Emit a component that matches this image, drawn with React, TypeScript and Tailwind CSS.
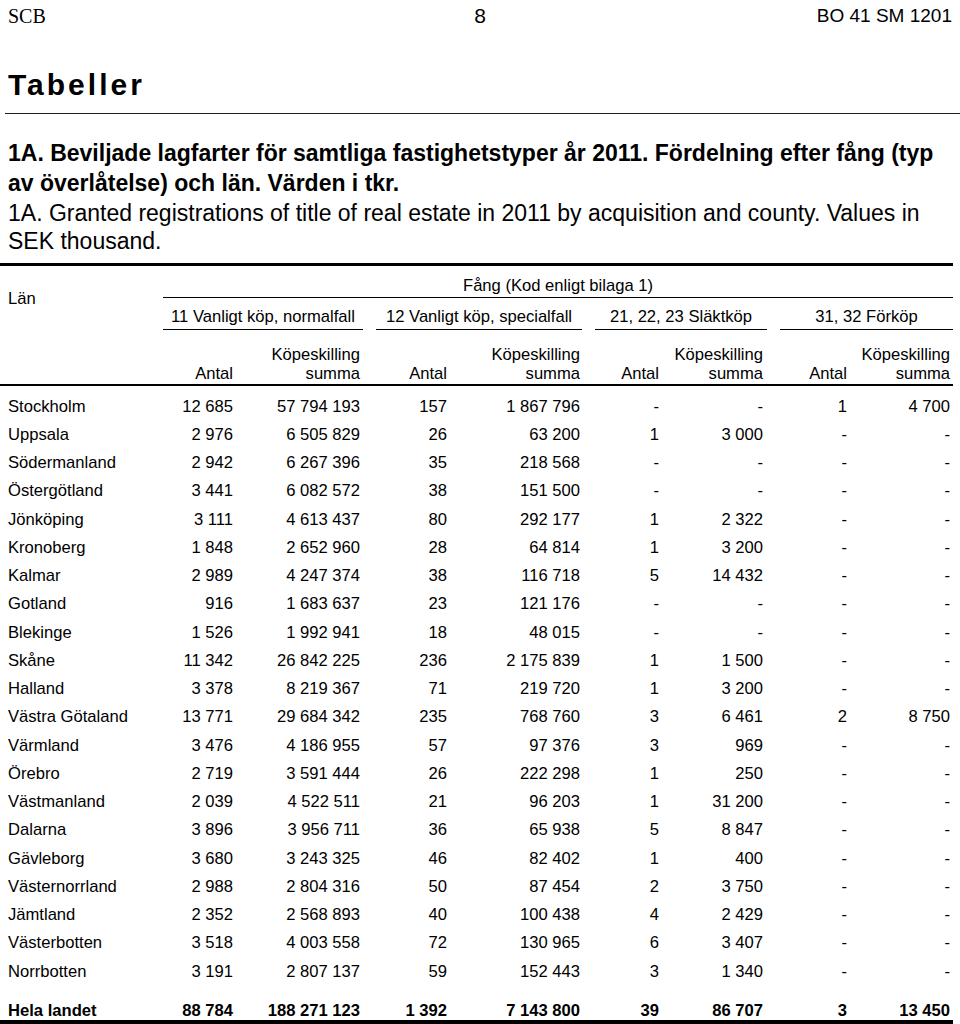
import React from 'react'

type Row = [string, string, string, string, string, string, string, string, string]

const rows: Row[] = [
  ['Stockholm', '12 685', '57 794 193', '157', '1 867 796', '-', '-', '1', '4 700'],
  ['Uppsala', '2 976', '6 505 829', '26', '63 200', '1', '3 000', '-', '-'],
  ['Södermanland', '2 942', '6 267 396', '35', '218 568', '-', '-', '-', '-'],
  ['Östergötland', '3 441', '6 082 572', '38', '151 500', '-', '-', '-', '-'],
  ['Jönköping', '3 111', '4 613 437', '80', '292 177', '1', '2 322', '-', '-'],
  ['Kronoberg', '1 848', '2 652 960', '28', '64 814', '1', '3 200', '-', '-'],
  ['Kalmar', '2 989', '4 247 374', '38', '116 718', '5', '14 432', '-', '-'],
  ['Gotland', '916', '1 683 637', '23', '121 176', '-', '-', '-', '-'],
  ['Blekinge', '1 526', '1 992 941', '18', '48 015', '-', '-', '-', '-'],
  ['Skåne', '11 342', '26 842 225', '236', '2 175 839', '1', '1 500', '-', '-'],
  ['Halland', '3 378', '8 219 367', '71', '219 720', '1', '3 200', '-', '-'],
  ['Västra Götaland', '13 771', '29 684 342', '235', '768 760', '3', '6 461', '2', '8 750'],
  ['Värmland', '3 476', '4 186 955', '57', '97 376', '3', '969', '-', '-'],
  ['Örebro', '2 719', '3 591 444', '26', '222 298', '1', '250', '-', '-'],
  ['Västmanland', '2 039', '4 522 511', '21', '96 203', '1', '31 200', '-', '-'],
  ['Dalarna', '3 896', '3 956 711', '36', '65 938', '5', '8 847', '-', '-'],
  ['Gävleborg', '3 680', '3 243 325', '46', '82 402', '1', '400', '-', '-'],
  ['Västernorrland', '2 988', '2 804 316', '50', '87 454', '2', '3 750', '-', '-'],
  ['Jämtland', '2 352', '2 568 893', '40', '100 438', '4', '2 429', '-', '-'],
  ['Västerbotten', '3 518', '4 003 558', '72', '130 965', '6', '3 407', '-', '-'],
  ['Norrbotten', '3 191', '2 807 137', '59', '152 443', '3', '1 340', '-', '-'],
]

const total: Row = ['Hela landet', '88 784', '188 271 123', '1 392', '7 143 800', '39', '86 707', '3', '13 450']

// right padding per numeric column, last one sits closer to the edge
const numPad = ['pr-[7px]', 'pr-[7px]', 'pr-[7px]', 'pr-[7px]', 'pr-[7px]', 'pr-[7px]', 'pr-[7px]', 'pr-[3px]']

const groups = [
  { label: '11 Vanligt köp, normalfall', line: 'ml-0 mr-[4px]' },
  { label: '12 Vanligt köp, specialfall', line: 'ml-[9px] mr-[5px]' },
  { label: '21, 22, 23 Släktköp', line: 'ml-[8px] mr-[3px]' },
  { label: '31, 32 Förköp', line: 'ml-[10px] mr-0' },
]

function DataRow({ row, bold }: { row: Row; bold?: boolean }) {
  const cell = bold ? 'pt-[4px]' : ''
  return (
    <tr className={bold ? 'h-[25px] border-b-[4px] border-black font-bold' : 'h-[28.25px]'}>
      <td className={`p-0 pl-2 whitespace-nowrap ${cell}`}>{row[0]}</td>
      {row.slice(1).map((v, i) => (
        <td key={i} className={`p-0 text-right whitespace-nowrap ${numPad[i]} ${cell}`}>
          {v}
        </td>
      ))}
    </tr>
  )
}

export default function App() {
  return (
    <div className="w-[960px] bg-white text-black font-['Liberation_Sans',Arial,sans-serif]">
      <header className="grid h-6 grid-cols-3 items-center px-2">
        <span className="font-['Liberation_Serif',serif] text-[20px]">SCB</span>
        <span className="text-center text-[21px]">8</span>
        <span className="text-right text-[19px]">BO 41 SM 1201</span>
      </header>

      <h1 className="mt-[43px] pl-2 text-[30px] font-bold leading-[36px] tracking-[3px]">
        Tabeller
      </h1>
      <div className="mt-[10px] ml-[5px] border-t border-[#222]" />

      <h2 className="mt-[24px] pl-2 text-[23px] font-bold leading-[30px]">
        1A. Beviljade lagfarter för samtliga fastighetstyper år 2011. Fördelning efter fång (typ
        <br />
        av överlåtelse) och län. Värden i tkr.
      </h2>
      <p className="mt-[1px] pl-2 text-[23px] leading-[28px]">
        1A. Granted registrations of title of real estate in 2011 by acquisition and county. Values in
        <br />
        SEK thousand.
      </p>

      <table className="mt-[8px] w-[953px] table-fixed border-collapse border-t-[3px] border-black text-[16.6px] leading-[19px]">
        <colgroup>
          <col className="w-[163px]" />
          <col className="w-[77px]" />
          <col className="w-[127px]" />
          <col className="w-[87px]" />
          <col className="w-[133px]" />
          <col className="w-[79px]" />
          <col className="w-[104px]" />
          <col className="w-[84px]" />
          <col className="w-[99px]" />
        </colgroup>
        <thead>
          <tr className="h-[33px]">
            <th rowSpan={2} className="p-0 pl-2 text-left align-middle font-normal">
              Län
            </th>
            <th colSpan={8} className="border-b border-black p-0 pt-[7px] text-center font-normal">
              Fång (Kod enligt bilaga 1)
            </th>
          </tr>
          <tr>
            {groups.map((g) => (
              <th key={g.label} colSpan={2} className="p-0 font-normal">
                <div className={`flex h-[32px] items-center justify-center border-b border-black pt-[5px] ${g.line}`}>
                  {g.label}
                </div>
              </th>
            ))}
          </tr>
          <tr className="h-[55px] border-b-2 border-black">
            <th className="p-0" />
            {groups.map((g, gi) => (
              <React.Fragment key={g.label}>
                <th className={`p-0 pb-[1px] text-right align-bottom font-normal ${numPad[gi * 2]}`}>Antal</th>
                <th className={`p-0 pb-[1px] text-right align-bottom font-normal ${numPad[gi * 2 + 1]}`}>
                  Köpeskilling
                  <br />
                  summa
                </th>
              </React.Fragment>
            ))}
          </tr>
        </thead>
        <tbody>
          <tr className="h-[7px]">
            <td colSpan={9} className="p-0" />
          </tr>
          {rows.map((r) => (
            <DataRow key={r[0]} row={r} />
          ))}
          <tr className="h-[12px]">
            <td colSpan={9} className="p-0" />
          </tr>
          <DataRow row={total} bold />
        </tbody>
      </table>
    </div>
  )
}
